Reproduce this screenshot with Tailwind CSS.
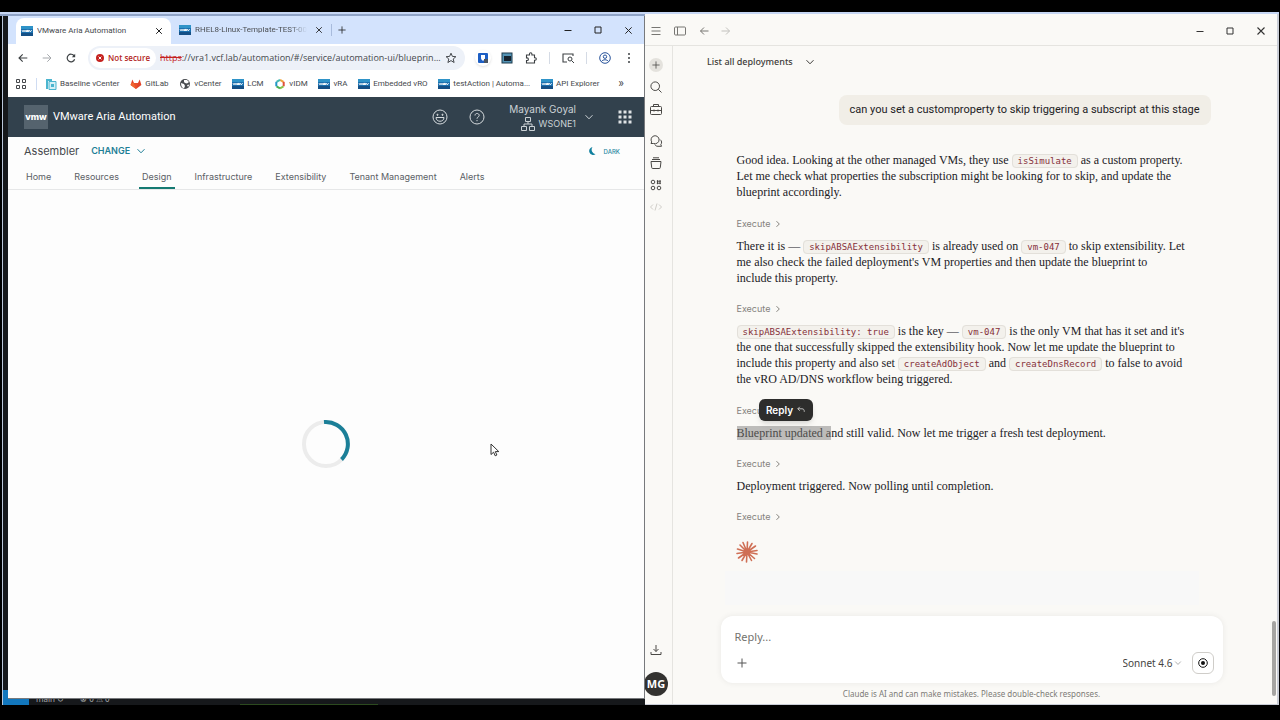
<!DOCTYPE html>
<html lang="en">
<head>
  <meta charset="UTF-8" />
  <meta name="viewport" content="width=device-width, initial-scale=1.0" />
  <title>VMware Aria Automation</title>
  <script src="https://cdn.jsdelivr.net/npm/@tailwindcss/browser@4"></script>
</head>
<body class="bg-black font-['Open_Sans',sans-serif]">
  <!-- Shared icons -->
  <svg class="hidden">
    <symbol id="vmw" viewBox="0 0 12 12">
      <rect y="1" width="12" height="10" fill="#1a6fae" />
      <rect y="1" width="12" height="3" fill="#2f93c8" />
      <rect y="8" width="12" height="3" fill="#155086" />
      <path d="M1 5.2l1 1.6 1-1.6 1 1.6.8-1.4.8 1.4V5.4h1v1.4-1.4h1v1.4l1-1.4.8 1.4 1.2-1.6" stroke="#fff" stroke-width="1" fill="none" />
    </symbol>
    <symbol id="chev-down" viewBox="0 0 10 10"><path d="M1.5 3.2L5 6.8l3.5-3.6" fill="none" stroke="currentColor" /></symbol>
    <symbol id="chev-right" viewBox="0 0 8 8"><path d="M2.5 1.2L5.3 4 2.5 6.8" fill="none" stroke="currentColor" /></symbol>
    <symbol id="cross" viewBox="0 0 10 10"><path d="M1.5 1.5l7 7m0-7l-7 7" fill="none" stroke="currentColor" stroke-width="1.1" /></symbol>
    <symbol id="plus" viewBox="0 0 10 10"><path d="M5 .5v9M.5 5h9" fill="none" stroke="currentColor" /></symbol>
  </svg>

  <div class="h-screen pt-3 pb-[15px] flex flex-col">
    <div class="flex-1 min-h-0 grid grid-cols-[645px_1fr] border-t-2 border-[#c6d6f3] mr-px">

      <!-- Editor window sitting behind the browser -->
      <div class="relative flex flex-col min-h-0 min-w-0 bg-[#16181b] border-t-2 border-[#8fa3c6] pl-2">
        <div class="absolute left-0 inset-y-0 w-[3px] bg-black border-r border-[#b9c6da]"></div>
        <div class="absolute left-[3px] bottom-0 w-[26px] h-[15px] bg-[#1277bd]"></div>

        <!-- Browser -->
        <main class="relative flex-1 min-h-0 flex flex-col bg-[#fdfdfd] border-r border-b border-[#77797c] overflow-hidden text-[#45484c]">
          <!-- Tab strip -->
          <div class="h-7 shrink-0 bg-[#d3e3fd] flex items-center pl-2 text-[8px] font-['Roboto',sans-serif]">
            <div class="self-end h-[26px] w-[155px] bg-white rounded-t-lg flex items-center pl-[5px] pr-2">
              <svg class="size-3"><use href="#vmw" /></svg>
              <span class="ml-1 flex-1 truncate">VMware Aria Automation</span>
              <button aria-label="Close tab"><svg class="size-2 text-black"><use href="#cross" /></svg></button>
            </div>
            <div class="h-[26px] w-40 flex items-center pl-2 pr-2">
              <svg class="size-3"><use href="#vmw" /></svg>
              <span class="ml-1 w-[112px] overflow-hidden whitespace-nowrap text-transparent bg-clip-text bg-linear-to-r from-[#45484c] from-85% to-transparent">RHEL8-Linux-Template-TEST-001</span>
              <button class="ml-auto" aria-label="Close tab"><svg class="size-2 text-[#222]"><use href="#cross" /></svg></button>
            </div>
            <span class="w-px h-3 bg-[#a8bbdc]"></span>
            <button class="ml-1.5" aria-label="New tab"><svg class="size-2 text-[#222]"><use href="#plus" /></svg></button>
            <div class="ml-auto flex items-center gap-[22px] pr-[11px] text-[#222]">
              <button aria-label="Minimize"><svg class="size-2" viewBox="0 0 8 8"><path d="M.5 4.5h7" stroke="currentColor" /></svg></button>
              <button aria-label="Maximize"><svg class="size-2" viewBox="0 0 8 8"><path d="M1 1h6v6H1z" fill="none" stroke="currentColor" /></svg></button>
              <button aria-label="Close"><svg class="size-[9px]"><use href="#cross" /></svg></button>
            </div>
          </div>

          <!-- Toolbar -->
          <div class="h-7 shrink-0 bg-white flex items-center pl-2.5 pr-[13px]">
            <div class="flex items-center gap-3.5 text-[#3c4043]">
              <button aria-label="Back"><svg class="size-2.5" viewBox="0 0 10 10"><path d="M9.3 5H1.2M4.7 1.3L1 5l3.7 3.7" fill="none" stroke="currentColor" stroke-width="1.1" /></svg></button>
              <button aria-label="Forward" class="text-[#a5a8ac]"><svg class="size-2.5" viewBox="0 0 10 10"><path d="M.7 5h8.1M5.3 1.3L9 5 5.3 8.7" fill="none" stroke="currentColor" /></svg></button>
              <button aria-label="Reload"><svg class="size-2.5" viewBox="0 0 10 10"><path d="M8.6 6.2A3.8 3.8 0 1 1 8.2 3" fill="none" stroke="currentColor" stroke-width="1.2" /><path d="M9.2.8v3.4H5.8z" fill="currentColor" /></svg></button>
            </div>
            <div class="ml-3 flex-1 h-6 bg-[#edf1f8] rounded-full flex items-center pl-0.5 pr-2">
              <div class="h-5 bg-white rounded-full flex items-center gap-1 px-1.5 text-[8px] text-[#b3261e] font-semibold whitespace-nowrap">
                <svg class="size-2" viewBox="0 0 8 8"><circle cx="4" cy="4" r="4" fill="#c5221f" /><path d="M2.6 2.6l2.8 2.8m0-2.8L2.6 5.4" stroke="#fff" /></svg>
                Not secure
              </div>
              <label for="url" class="ml-1 text-[9px] text-[#c5221f] line-through">https</label>
              <input id="url" class="flex-1 min-w-0 text-[9px] outline-none" value="://vra1.vcf.lab/automation/#/service/automation-ui/blueprin..." />
              <button aria-label="Bookmark"><svg class="size-3" viewBox="0 0 12 12"><path d="M6 1.2l1.4 3.2 3.5.3-2.7 2.3.9 3.5L6 8.6l-3.1 1.9.9-3.5L1.1 4.7l3.5-.3z" fill="none" stroke="#45484c" /></svg></button>
            </div>
            <div class="ml-2.5 flex items-center gap-3">
              <button aria-label="Password manager" class="size-4 -mr-0.5 rounded-full bg-white shadow flex items-center justify-center"><svg class="size-3" viewBox="0 0 12 12"><rect x="1" y="1" width="10" height="10" rx="1" fill="#1e5fc4" /><path d="M4 3h4v3c0 1.500-1 2-2 3-1-1-2-1.500-2-3z" fill="#fff" /><rect x="7" y="7" width="4" height="4" fill="#4b5563" /></svg></button>
              <button aria-label="Screen capture"><svg class="size-3" viewBox="0 0 12 12"><rect x="1" y="1" width="10" height="10" fill="#5393b5" stroke="#1e3a4c" /><rect x="3" y="4" width="7" height="5" fill="#16222e" /></svg></button>
              <button aria-label="Extensions"><svg class="size-3" viewBox="0 0 12 12"><path d="M1.500 3h3V2a1.200 1.200 0 0 1 2.400 0v1h2.600v2.800h.6a1.200 1.200 0 0 1 0 2.400h-.6V11h-8V8.500h.6a1.300 1.300 0 0 0 0-2.600h-.6z" fill="none" stroke="#3c4043" stroke-width="1.1" /></svg></button>
              <span class="w-px h-3 bg-[#d5dbe5]"></span>
              <button aria-label="Search page"><svg class="size-3" viewBox="0 0 12 12"><path d="M5 10H1V2h10v2M1 2h3" fill="none" stroke="#3c4043" stroke-width="1.100" /><circle cx="8" cy="7" r="2" fill="none" stroke="#3c4043" /><path d="M9.500 8.500L12 11" stroke="#3c4043" /></svg></button>
              <span class="w-px h-3 bg-[#d5dbe5]"></span>
              <button aria-label="Profile"><svg class="size-3" viewBox="0 0 12 12" fill="none" stroke="#28539a"><circle cx="6" cy="6" r="5.300" /><circle cx="6" cy="4.700" r="1.700" /><path d="M2.500 9.500c1.500-2.300 5.500-2.300 7 0" /></svg></button>
              <button aria-label="Menu" class="ml-1"><svg class="w-1 h-3" viewBox="0 0 4 12" fill="#3c4043"><circle cx="2" cy="2" r="1" /><circle cx="2" cy="6" r="1" /><circle cx="2" cy="10" r="1" /></svg></button>
            </div>
          </div>

          <!-- Bookmarks -->
          <nav class="h-[25px] pb-0.5 shrink-0 bg-white flex items-center pl-2 pr-5 text-[8px] whitespace-nowrap font-['Roboto',sans-serif]">
            <svg class="size-2.5 shrink-0" viewBox="0 0 10 10" fill="none" stroke="#45484c"><path d="M.5.5h3v3h-3zM6.500.5h3v3h-3zM.5 6.500h3v3h-3zM6.500 6.500h3v3h-3z" /></svg>
            <span class="w-px h-3 bg-[#cfdcf2] ml-2.5 mr-2"></span>
            <div class="flex-1 flex items-center justify-between">
              <a href="#" class="flex items-center gap-[3px]"><svg class="size-3" viewBox="0 0 12 12"><path d="M1 1h6v2H3v8H1z" fill="#4bb5cf" /><path d="M4 3.500h7v8H4z" fill="#d6f0f6" stroke="#4bb5cf" /><path d="M6 6h3v3H6z" fill="#4bb5cf" /></svg>Baseline vCenter</a>
              <a href="#" class="flex items-center gap-[3px]"><svg class="size-3" viewBox="0 0 12 12"><path d="M6 11L.6 7 2.300 1.500 4 5h4l1.700-3.500L11.400 7z" fill="#e24329" /><path d="M6 11L4 5h4z" fill="#e8502e" /><path d="M6 11L.6 7l.6-2L4 5z" fill="#f0642f" /></svg>GitLab</a>
              <a href="#" class="flex items-center gap-[3px]"><svg class="size-3" viewBox="0 0 12 12"><circle cx="6" cy="6" r="5" fill="#4a4d51" /><path d="M2 5l3 1 1 2-1 2.500C3 10 2 8 2 5zM5 2l3 0 2 2-2 1.500-2-.5-1-1zM8 7l2.500-.5L9 9z" fill="#fff" /></svg>vCenter</a>
              <a href="#" class="flex items-center gap-[3px]"><svg class="size-3"><use href="#vmw" /></svg>LCM</a>
              <a href="#" class="flex items-center gap-[3px]"><svg class="size-3" viewBox="0 0 12 12" fill="none" stroke-width="2"><path d="M6 1.800l3.500 2" stroke="#f2a33a" /><path d="M9.700 3.800v4.500" stroke="#e0503a" /><path d="M9.500 8.300L6 10.300" stroke="#8bc34a" /><path d="M6 10.300l-3.500-2" stroke="#4caf50" /><path d="M2.300 8.300V3.800" stroke="#2196c9" /><path d="M2.500 3.800l3.500-2" stroke="#45b7b0" /></svg>vIDM</a>
              <a href="#" class="flex items-center gap-[3px]"><svg class="size-3"><use href="#vmw" /></svg>vRA</a>
              <a href="#" class="flex items-center gap-[3px]"><svg class="size-3"><use href="#vmw" /></svg>Embedded vRO</a>
              <a href="#" class="flex items-center gap-[3px]"><svg class="size-3"><use href="#vmw" /></svg>testAction | Automa...</a>
              <a href="#" class="flex items-center gap-[3px]"><svg class="size-3"><use href="#vmw" /></svg>API Explorer</a>
              <button class="text-[12px] leading-3 pl-2 pb-0.5">»</button>
            </div>
          </nav>

          <!-- Product header -->
          <header class="h-10 shrink-0 bg-[#32414d] text-[#eef1f3] flex items-center pl-4 pr-3">
            <div class="size-6 bg-[#55636e] flex items-center justify-center font-['Inter',sans-serif] font-extrabold text-[9px] text-white">vmw</div>
            <h1 class="ml-[5px] text-[11px] font-['Roboto',sans-serif] text-white">VMware Aria Automation</h1>
            <div class="ml-auto flex items-center font-['Inter',sans-serif]">
              <button aria-label="Feedback"><svg class="size-4" viewBox="0 0 16 16" fill="none" stroke="#d5dadd"><circle cx="8" cy="8" r="7" /><path d="M4 8.500h8c0 5-8 5-8 0z" /><circle cx="5.500" cy="5.800" r=".6" fill="#d5dadd" /><circle cx="10.500" cy="5.800" r=".6" fill="#d5dadd" /></svg></button>
              <button aria-label="Help" class="ml-[21px]"><svg class="size-4" viewBox="0 0 16 16" fill="none" stroke="#d5dadd"><circle cx="8" cy="8" r="7" /><path d="M6 6.500c0-2.800 4.200-2.600 4.200 0C10.200 8 8 8 8 9.700M8 11v1.200" /></svg></button>
              <button class="ml-6 flex items-center text-[#cbd1d5]">
                <span class="text-right">
                  <span class="block text-[10px] leading-[14px]">Mayank Goyal</span>
                  <span class="flex items-center justify-end gap-1 text-[9px] leading-4"><svg class="size-3.5" viewBox="0 0 14 14" fill="none" stroke="currentColor"><path d="M4.500.5h5v4h-5zM.5 9.500h5v4h-5zM8.500 9.500h5v4h-5zM7 4.500V7M3 9.500V7h8v2.500" /></svg>WSONE1</span>
                </span>
                <svg class="ml-2 size-2.5"><use href="#chev-down" /></svg>
              </button>
              <button aria-label="Applications" class="ml-[24px]"><svg class="size-3.5" viewBox="0 0 14 14" fill="#dfe3e5"><path d="M.5.5h3v3h-3zM5.500.5h3v3h-3zM10.500.5h3v3h-3zM.5 5.500h3v3h-3zM5.500 5.500h3v3h-3zM10.500 5.500h3v3h-3zM.5 10.500h3v3h-3zM5.500 10.500h3v3h-3zM10.500 10.500h3v3h-3z" /></svg></button>
            </div>
          </header>

          <!-- Service bar -->
          <div class="h-7 shrink-0 flex items-center pl-4 pr-6 font-['Inter',sans-serif]">
            <h2 class="text-[11px]">Assembler</h2>
            <button class="ml-3 flex items-center gap-1.5 text-[9px] font-semibold text-[#1f7f97]">CHANGE<svg class="size-2.5"><use href="#chev-down" /></svg></button>
            <button class="ml-auto flex items-center gap-2 text-[6px] font-medium text-[#2b8aa3]"><svg class="size-2" viewBox="0 0 8 8"><path d="M4.500 0a4 4 0 1 0 3 7.200A4.600 4.600 0 0 1 4.500 0z" fill="#0f7f9e" /></svg>DARK</button>
          </div>
          <nav class="h-[25px] shrink-0 border-b border-[#e6e7e8] flex items-stretch gap-[17px] pl-[15px] font-['Inter',sans-serif] text-[9px] text-[#5b6065]">
            <a href="#" class="px-[3px] flex items-center">Home</a>
            <a href="#" class="px-[3px] flex items-center">Resources</a>
            <a href="#" class="px-[3px] flex items-center shadow-[inset_0_-2px_0_#157a72]">Design</a>
            <a href="#" class="px-[3px] flex items-center">Infrastructure</a>
            <a href="#" class="px-[3px] flex items-center">Extensibility</a>
            <a href="#" class="px-[3px] flex items-center">Tenant Management</a>
            <a href="#" class="px-[3px] flex items-center">Alerts</a>
          </nav>

          <!-- Loading -->
          <div class="flex-1 flex items-center justify-center">
            <svg class="size-12" viewBox="0 0 48 48" fill="none" stroke-width="4"><circle cx="24" cy="24" r="22" stroke="#ececec" /><path d="M22 2.100A22 22 0 0 1 39.500 39.500" stroke="#1b7f98" /></svg>
          </div>

          <svg class="absolute left-[482px] top-[427px] w-[10px] h-[14px]" viewBox="0 0 10 14"><path d="M1 1v10.500l2.600-2.300 1.600 3.600 1.700-.8-1.600-3.400h3.500z" fill="#fff" stroke="#333" /></svg>
        </main>

        <!-- Editor status bar -->
        <div class="h-1.5 shrink-0 flex items-end gap-6 pl-7 overflow-hidden text-[8px] leading-3 text-[#a9acaf] font-['Noto_Sans',sans-serif]">
          <span>main ↻</span><span class="-ml-2">⊗ 0 ⚠ 0</span>
          <span class="ml-[107px] w-[138px] h-px bg-[#2c4a1f]"></span>
        </div>
      </div>

      <!-- Chat app -->
      <div class="flex flex-col min-h-0 bg-[#faf9f6] border-r-2 border-b border-[#c9cdd6] font-['Noto_Sans',sans-serif] text-[#2b2b29]">
        <div class="h-8 shrink-0 border-b border-[#e5e4e0] flex items-center pl-1.5 pr-[11px] pt-0.5 text-[#777672]">
          <button aria-label="Menu"><svg class="size-2.5" viewBox="0 0 10 10" stroke="currentColor"><path d="M.5 1.500h9M.5 5h9M.5 8.500h9" /></svg></button>
          <button aria-label="Toggle sidebar" class="ml-[13px]"><svg class="w-3 h-2.5" viewBox="0 0 12 10" fill="none" stroke="currentColor"><rect x=".5" y="1" width="11" height="8" rx="1" /><path d="M3.500 1v8" /></svg></button>
          <button aria-label="Back" class="ml-[13px]"><svg class="size-2.5" viewBox="0 0 10 10"><path d="M9.500 5h-8M5 1.500L1.500 5 5 8.500" fill="none" stroke="currentColor" /></svg></button>
          <button aria-label="Forward" class="ml-3 text-[#c2c1bd]"><svg class="size-2.5" viewBox="0 0 10 10"><path d="M.5 5h8M5 1.500L8.500 5 5 8.500" fill="none" stroke="currentColor" /></svg></button>
          <div class="ml-auto flex items-center gap-[22px] text-[#333]">
            <button aria-label="Minimize"><svg class="size-2" viewBox="0 0 8 8"><path d="M.5 4.500h7" stroke="currentColor" /></svg></button>
            <button aria-label="Maximize"><svg class="size-2" viewBox="0 0 8 8"><path d="M1 1h6v6H1z" fill="none" stroke="currentColor" /></svg></button>
            <button aria-label="Close"><svg class="size-2.5"><use href="#cross" /></svg></button>
          </div>
        </div>

        <div class="flex-1 min-h-0 flex">
          <!-- Sidebar -->
          <aside class="w-7 shrink-0 border-r border-[#e5e4e0] flex flex-col items-center pt-3 pb-2 pr-[5px] text-[#4a4946]">
            <button aria-label="New chat" class="size-3.5 rounded-full bg-[#e4e2dd] flex items-center justify-center"><svg class="size-2"><use href="#plus" /></svg></button>
            <button aria-label="Search" class="mt-2"><svg class="size-3.5" viewBox="0 0 14 14" fill="none" stroke="currentColor"><circle cx="6.200" cy="6.200" r="4.300" /><path d="M9.300 9.300l3.200 3.200" /></svg></button>
            <button aria-label="Customize" class="mt-2"><svg class="size-3.5" viewBox="0 0 14 14" fill="none" stroke="currentColor"><rect x="1.500" y="4.500" width="11" height="8" rx="1" /><path d="M4.500 4.500v-2h5v2M1.500 8.500h11M5 7.500v2M9 7.500v2" /></svg></button>
            <button aria-label="Chats" class="mt-[18px]"><svg class="size-3.5" viewBox="0 0 14 14" fill="none" stroke="currentColor"><path d="M2 9.500l.7-1.600a4 4 0 1 1 2 1.600z" /><path d="M11 5.500c2 1.300 2 3.700.8 5l.7 1.800H9c-1.500 0-2.500-.5-3.200-1.800" /></svg></button>
            <button aria-label="Projects" class="mt-2"><svg class="size-3.5" viewBox="0 0 14 14" fill="none" stroke="currentColor"><path d="M2 5.500h10l-.7 6a1 1 0 0 1-1 1H3.700a1 1 0 0 1-1-1zM3 3.500h8M4 1.800h6" /></svg></button>
            <button aria-label="Artifacts" class="mt-2"><svg class="size-3.5" viewBox="0 0 14 14" fill="none" stroke="currentColor"><circle cx="4" cy="4" r="1.800" /><path d="M8.500 2.200v4M11 2.200v4M7.800 3.200h4.200M7.800 5.200h4.200" /><circle cx="4" cy="10" r="1.800" /><circle cx="10" cy="10" r="1.800" /></svg></button>
            <button aria-label="Code" class="mt-2 text-[#cfcdc8]"><svg class="size-3.5" viewBox="0 0 14 14" fill="none" stroke="currentColor"><path d="M4 4.500L1.500 7 4 9.500M10 4.500L12.500 7 10 9.500M8 3.500l-2 7" /></svg></button>
            <button aria-label="Downloads" class="mt-auto"><svg class="size-3" viewBox="0 0 12 12" fill="none" stroke="currentColor"><path d="M6 1v6.500M3.500 5L6 7.500 8.500 5M1 8v2.500h10V8" /></svg></button>
            <button class="mt-4 size-6 shrink-0 rounded-full bg-[#333230] text-white text-[11px] font-bold">MG</button>
          </aside>

          <!-- Conversation -->
          <section class="flex-1 min-w-0 flex flex-col">
            <div class="h-8 shrink-0 flex items-center pl-[34px]">
              <button class="flex items-center gap-3 text-[9px] font-medium text-[#3d3c39]">List all deployments<svg class="size-2.5"><use href="#chev-down" /></svg></button>
            </div>
            <div class="flex-1 min-h-0 w-full max-w-[502px] mx-auto pl-4 pr-3 pt-[17px] font-['Liberation_Serif',serif] text-[12px] leading-4 text-[#22211f]">
              <div class="flex justify-end">
                <div class="h-[30px] px-[11px] rounded-lg bg-[#f1eee7] flex items-center font-['Roboto',sans-serif] text-[11px] whitespace-nowrap">can you set a customproperty to skip triggering a subscript at this stage</div>
              </div>
              <p class="mt-[27px] mb-4">Good idea. Looking at the other managed VMs, they use <code class="px-[5px] py-px rounded border border-[#e3e0da] bg-[#f3f1ec] font-['DejaVu_Sans_Mono',monospace] text-[9px] leading-3 text-[#86303a]">isSimulate</code> as a custom property.<br />Let me check what properties the subscription might be looking for to skip, and update the<br />blueprint accordingly.</p>
              <button class="flex items-center gap-1 h-4 mb-1.5 font-['Inter',sans-serif] text-[9px] text-[#84827d]">Execute<svg class="size-2"><use href="#chev-right" /></svg></button>
              <p class="mb-[15px]">There it is — <code class="px-[5px] py-px rounded border border-[#e3e0da] bg-[#f3f1ec] font-['DejaVu_Sans_Mono',monospace] text-[9px] leading-3 text-[#86303a]">skipABSAExtensibility</code> is already used on <code class="px-[5px] py-px rounded border border-[#e3e0da] bg-[#f3f1ec] font-['DejaVu_Sans_Mono',monospace] text-[9px] leading-3 text-[#86303a]">vm-047</code> to skip extensibility. Let<br />me also check the failed deployment's VM properties and then update the blueprint to<br />include this property.</p>
              <button class="flex items-center gap-1 h-4 mb-1.5 font-['Inter',sans-serif] text-[9px] text-[#84827d]">Execute<svg class="size-2"><use href="#chev-right" /></svg></button>
              <p class="mb-4"><code class="px-[5px] py-px rounded border border-[#e3e0da] bg-[#f3f1ec] font-['DejaVu_Sans_Mono',monospace] text-[9px] leading-3 text-[#86303a]">skipABSAExtensibility: true</code> is the key — <code class="px-[5px] py-px rounded border border-[#e3e0da] bg-[#f3f1ec] font-['DejaVu_Sans_Mono',monospace] text-[9px] leading-3 text-[#86303a]">vm-047</code> is the only VM that has it set and it's<br />the one that successfully skipped the extensibility hook. Now let me update the blueprint to<br />include this property and also set <code class="px-[5px] py-px rounded border border-[#e3e0da] bg-[#f3f1ec] font-['DejaVu_Sans_Mono',monospace] text-[9px] leading-3 text-[#86303a]">createAdObject</code> and <code class="px-[5px] py-px rounded border border-[#e3e0da] bg-[#f3f1ec] font-['DejaVu_Sans_Mono',monospace] text-[9px] leading-3 text-[#86303a]">createDnsRecord</code> to false to avoid<br />the vRO AD/DNS workflow being triggered.</p>
              <div class="relative">
                <button class="flex items-center gap-1 h-4 mb-1.5 font-['Inter',sans-serif] text-[9px] text-[#84827d]">Execute<svg class="size-2"><use href="#chev-right" /></svg></button>
                <button class="absolute left-[22px] -top-1 h-[22px] w-[54px] rounded-md bg-[#2d2d2c] shadow-md flex items-center justify-center gap-1 font-['Inter',sans-serif] text-[10px] font-semibold text-white">Reply<svg class="size-2" viewBox="0 0 8 8"><path d="M2.800.8L.8 2.800l2 2M.8 2.800H5c1.700 0 2.300 1 2.300 3" fill="none" stroke="#ddd" stroke-width=".8" /></svg></button>
              </div>
              <p class="mb-[15px]"><mark class="bg-[#bdbcba] text-[#4c4b49]">Blueprint updated a</mark>nd still valid. Now let me trigger a fresh test deployment.</p>
              <button class="flex items-center gap-1 h-4 mb-1.5 font-['Inter',sans-serif] text-[9px] text-[#84827d]">Execute<svg class="size-2"><use href="#chev-right" /></svg></button>
              <p class="mb-[15px]">Deployment triggered. Now polling until completion.</p>
              <button class="flex items-center gap-1 h-4 mb-4 font-['Inter',sans-serif] text-[9px] text-[#84827d]">Execute<svg class="size-2"><use href="#chev-right" /></svg></button>
              <svg class="-ml-px size-[22px]" viewBox="0 0 22 22" stroke="#cf6f55" stroke-width="1.600" stroke-linecap="round"><path d="M11 11L11.500 1M11 11L16 2.500M11 11L19.500 5M11 11L21 9.500M11 11L21 13M11 11L18.500 17.500M11 11L15.500 19.500M11 11L10.500 21M11 11L6 19.500M11 11L2.500 17M11 11L1 12.500M11 11L1.500 8M11 11L4 4M11 11L7 1.500" /></svg>
              <div class="-ml-3 mr-3 mt-2 h-[34px] bg-[#f8f8f8]"></div>
            </div>

            <!-- Composer -->
            <form class="w-full max-w-[502px] mx-auto h-[67px] shrink-0 bg-white rounded-xl shadow-[0_0_6px_rgba(0,0,0,0.07)] flex flex-col px-3.5 pt-3 pb-2">
              <textarea aria-label="Reply" rows="1" placeholder="Reply..." class="resize-none outline-none h-[18px] leading-[18px] text-[11px] placeholder:text-[#73726e]"></textarea>
              <div class="mt-1.5 flex items-center pl-0.5 -mr-[5px]">
                <button type="button" aria-label="Attach"><svg class="size-2.5 text-[#555]"><use href="#plus" /></svg></button>
                <label for="model" class="sr-only">Model</label>
                <select id="model" class="ml-auto appearance-none outline-none text-[10px] text-[#454441]"><option>Sonnet 4.6</option></select>
                <svg class="ml-px size-2 text-[#999]"><use href="#chev-down" /></svg>
                <button type="button" aria-label="Stop" class="ml-2.5 size-[22px] rounded-md border border-[#cfcdc9] flex items-center justify-center"><svg class="size-2.5" viewBox="0 0 10 10"><circle cx="5" cy="5" r="4.300" fill="none" stroke="#111" /><circle cx="5" cy="5" r="2" fill="#111" /></svg></button>
              </div>
            </form>
            <p class="h-[21px] shrink-0 text-center text-[8px] leading-[21px] text-[#7d7b76]">Claude is AI and can make mistakes. Please double-check responses.</p>
          </section>

          <!-- Scrollbar -->
          <div class="w-[7px] shrink-0 flex flex-col items-center justify-end pb-2">
            <div class="w-1 h-[75px] rounded-full bg-[#a5a4a2]"></div>
          </div>
        </div>
      </div>
    </div>
  </div>
</body>
</html>
